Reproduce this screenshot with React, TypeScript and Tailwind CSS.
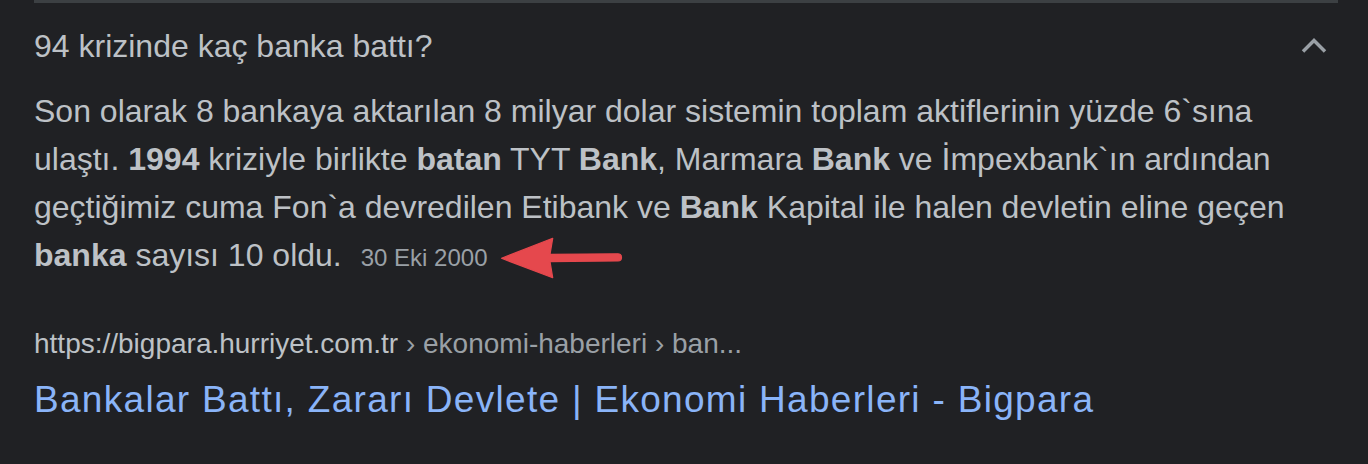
export default function App() {
  return (
    <div className="h-[464px] w-[1368px] overflow-hidden bg-[#202124] font-['Liberation_Sans',Arial,sans-serif]">
      <div className="ml-[34px] mr-[30px] border-t-[3px] border-[#3c4043]">
        <div className="flex items-center justify-between pt-[23px]">
          <h3 className="text-[32px] leading-[40px] text-[#bdc1c6]">94 krizinde kaç banka battı?</h3>
          <svg width="28" height="20" viewBox="0 0 28 20" className="mr-[10px] -mt-[3px]">
            <path d="M3 16.5 L14 5.5 L25 16.5" fill="none" stroke="#9aa0a6" strokeWidth="3.5" />
          </svg>
        </div>
        <div className="relative mt-[21px] text-[32px] leading-[48px] text-[#bdc1c6]">
          <p>
            Son olarak 8 bankaya aktarılan 8 milyar dolar sistemin toplam aktiflerinin yüzde 6`sına ulaştı.{" "}
            <b>1994</b> kriziyle birlikte <b>batan</b> TYT <b>Bank</b>, Marmara <b>Bank</b> ve İmpexbank`ın ardından
            geçtiğimiz cuma Fon`a devredilen Etibank ve <b>Bank</b> Kapital ile halen devletin eline geçen{" "}
            <b>banka</b> sayısı 10 oldu.
            <span className="ml-[19px] text-[24px] text-[#9aa0a6]">30 Eki 2000</span>
          </p>
          <svg
            width="126"
            height="48"
            viewBox="0 0 126 48"
            className="absolute left-[464px] top-[147px]"
          >
            <path
              d="M3.5 24.3 L54.7 4.3 L52 20.3 L120 19.8 Q123.5 20 123.5 23.4 Q123.5 26.8 120 27 L52 27.6 L54.7 43.7 Z"
              fill="#e5484d"
              stroke="#e5484d"
              strokeWidth="1.2"
              strokeLinejoin="round"
            />
          </svg>
        </div>
        <div className="mt-[44px] text-[28px] leading-[36px] text-[#bdc1c6]">
          https://bigpara.hurriyet.com.tr <span className="text-[#9aa0a6]">› ekonomi-haberleri › ban...</span>
        </div>
        <a className="mt-[16px] block text-[37px] leading-[44px] tracking-[1.3px] text-[#8ab4f8]">
          Bankalar Battı, Zararı Devlete | Ekonomi Haberleri - Bigpara
        </a>
      </div>
    </div>
  );
}
